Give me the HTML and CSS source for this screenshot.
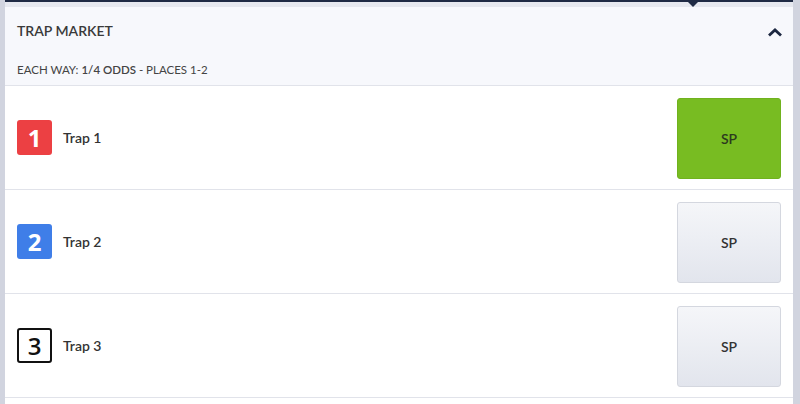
FILE: index.html
```html
<!DOCTYPE html>
<html lang="en">
    <head>
        <meta charset="UTF-8" />
        <title>Trap Market</title>
        <link rel="stylesheet" href="styles.css">
    </head>
    <body>
        <div class="market">
            <div class="tabs-bar">
                <span class="tab-pointer"></span>
            </div>
            <div class="market-header">
                <div class="market-title-row">
                    <h2 class="market-title">TRAP MARKET</h2>
                    <svg class="chevron" width="16" height="10" viewBox="0 0 16 10">
                        <path d="M2 8.5 L8 3 L14 8.5" fill="none" stroke="#1c2740" stroke-width="2.8" />
                    </svg>
                </div>
                <div class="each-way">EACH WAY: <span class="ew-odds">1/4 ODDS</span> - PLACES 1-2</div>
            </div>

            <div class="runner">
                <div class="runner-info">
                    <span class="trap trap-1">1</span>
                    <span class="runner-name">Trap 1</span>
                </div>
                <button class="price price-selected">SP</button>
            </div>
            <div class="runner">
                <div class="runner-info">
                    <span class="trap trap-2">2</span>
                    <span class="runner-name">Trap 2</span>
                </div>
                <button class="price">SP</button>
            </div>
            <div class="runner">
                <div class="runner-info">
                    <span class="trap trap-3">3</span>
                    <span class="runner-name">Trap 3</span>
                </div>
                <button class="price">SP</button>
            </div>
        </div>
    </body>
</html>
```

FILE: styles.css
```css
body {
    margin: 0;
    background-color: #d1d4df;
    font-family: Lato, "Open Sans", sans-serif;
    color: #333;
}

.market {
    margin-left: 5px;
    width: 788px;
    height: 404px;
    background-color: #fff;
}

.tabs-bar {
    position: relative;
    height: 5px;
    border-top: 2px solid #1f2a44;
    background-color: #e6e8ef;
}

.tab-pointer {
    position: absolute;
    left: 683px;
    top: 0;
    width: 0;
    height: 0;
    border-left: 5px solid transparent;
    border-right: 5px solid transparent;
    border-top: 5px solid #1f2a44;
}

.market-header {
    background-color: #f7f8fc;
    padding: 0 12px 0 12px;
    height: 79px;
    border-bottom: 1px solid #e1e3ea;
    box-sizing: border-box;
}

.market-title-row {
    display: flex;
    justify-content: space-between;
    align-items: center;
    height: 46px;
}

.market-title {
    margin: 0;
    font-size: 14px;
    font-weight: 600;
    color: #3a3a3a;
}

.chevron {
    margin-right: -2px;
    margin-top: 3px;
}

.each-way {
    font-size: 11.5px;
    color: #444;
    padding-top: 10px;
}

.ew-odds {
    font-weight: 600;
}

.runner {
    display: flex;
    justify-content: space-between;
    align-items: center;
    height: 104px;
    padding: 0 12px;
    border-bottom: 1px solid #e1e3ea;
    box-sizing: border-box;
}

.runner:first-of-type {
    height: 106px;
}

.runner-info {
    display: flex;
    align-items: center;
    gap: 11px;
}

.trap {
    display: flex;
    justify-content: center;
    align-items: center;
    width: 35px;
    height: 35px;
    border-radius: 3px;
    box-sizing: border-box;
    font-family: "Open Sans", sans-serif;
    font-size: 24px;
    font-weight: 700;
    color: #fff;
}

.trap-1 {
    background-color: #ec4043;
}

.trap-2 {
    background-color: #3f7ee8;
}

.trap-3 {
    background-color: #fff;
    border: 2px solid #111;
    color: #111;
    font-weight: 600;
}

.runner-name {
    font-size: 14px;
    font-weight: 600;
    color: #333;
}

.price {
    width: 104px;
    height: 81px;
    margin-top: 2px;
    border: 1px solid #d4d7df;
    border-radius: 3px;
    background: linear-gradient(#f5f6f9, #e2e5ed);
    font-family: Lato, sans-serif;
    font-size: 14px;
    font-weight: 600;
    color: #333;
}

.price-selected {
    background: #78bc22;
    border-color: #70b21e;
    color: #2c3a1e;
}
```
